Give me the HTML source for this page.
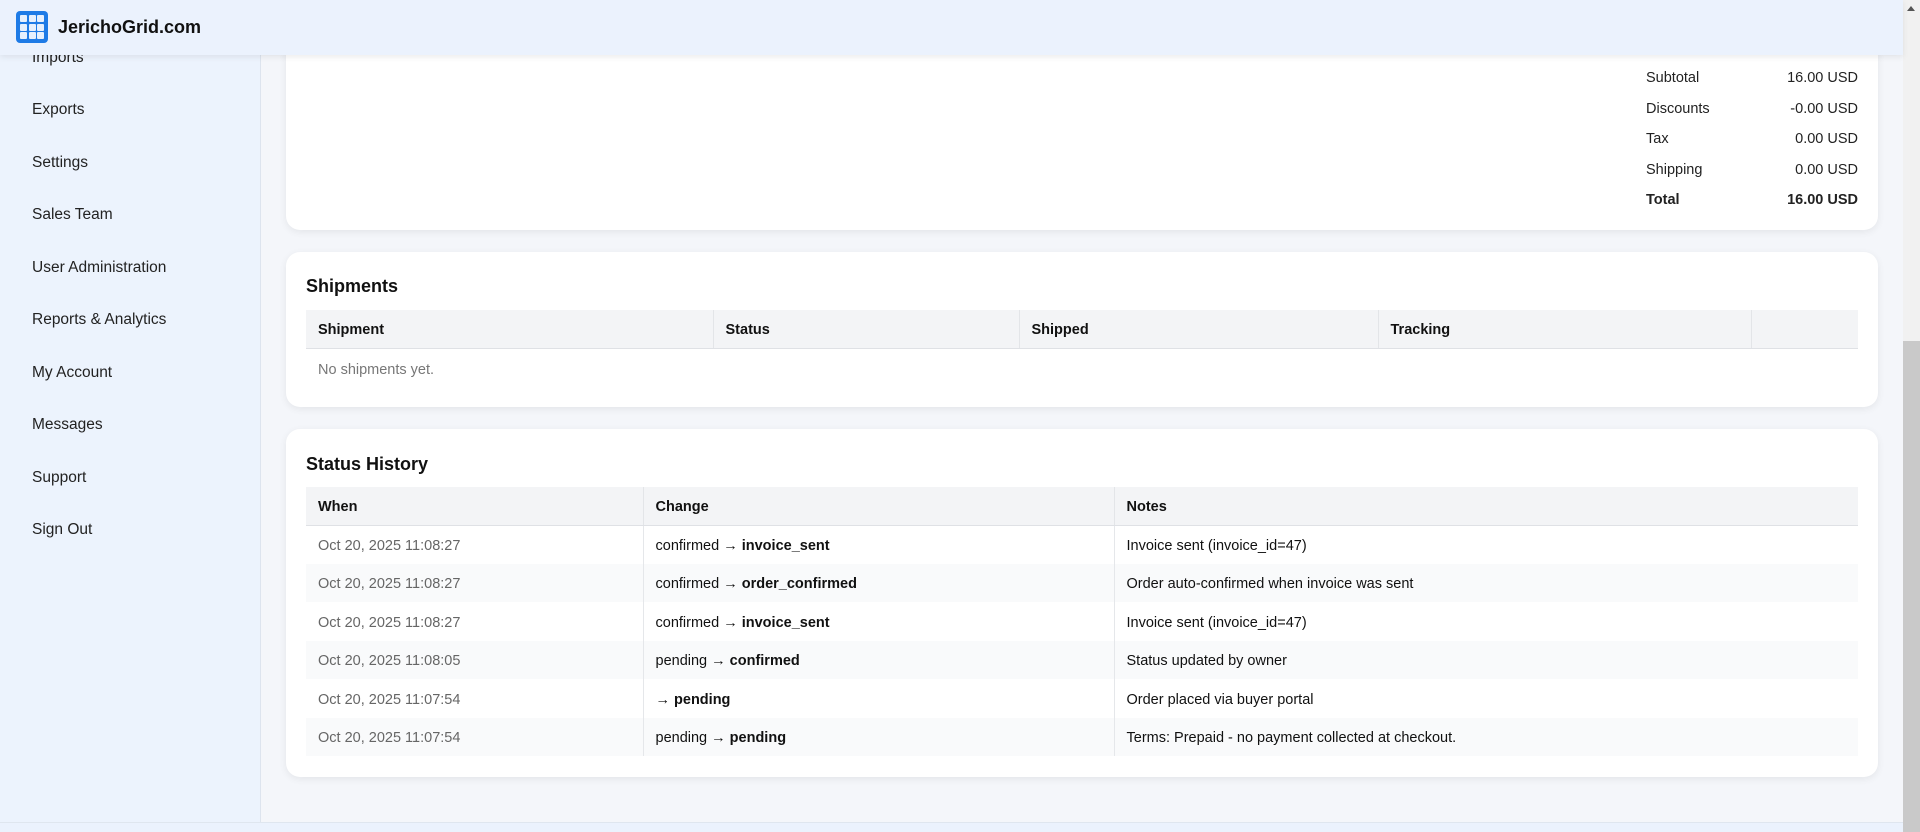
<!DOCTYPE html>
<html><head><meta charset="utf-8"><style>
*{box-sizing:border-box;margin:0;padding:0}
body{width:1920px;height:832px;overflow:hidden;background:#f4f6fa;font-family:"Liberation Sans",sans-serif;color:#1f2328;position:relative}
.hdr{position:absolute;left:0;top:0;width:1903px;height:55px;background:#ebf2fd;box-shadow:0 2px 6px rgba(0,0,0,.08);z-index:5}
.logo{position:absolute;left:16px;top:11px;width:32px;height:32px;background:#1e7be6;border-radius:4px}
.logo i{position:absolute;width:7px;height:7px;background:#e6f0fd;border-radius:1px}
.brand{position:absolute;left:58px;top:17px;font-size:18px;font-weight:bold;color:#111}
.side{position:absolute;left:0;top:0;width:261px;height:832px;background:#ecf3fd;border-right:1px solid #dde4ee}
.side div{position:absolute;left:32px;font-size:15.5px;color:#222}
.sb{position:absolute;right:0;top:0;width:17px;height:832px;background:#f1f1f1}
.thumb{position:absolute;right:0;top:341px;width:17px;height:491px;background:#c9c9c9}
.foot{position:absolute;left:0;top:822px;width:1903px;height:10px;background:#ebf2fd;border-top:1px solid #dfe6ef}
.card{position:absolute;left:286px;width:1592px;background:#fff;border-radius:14px;box-shadow:0 2px 8px rgba(0,0,0,.07)}
.sum div{position:absolute;font-size:14.5px;color:#222}
h2{position:absolute;left:20px;font-size:18px;font-weight:bold;color:#111}
table{position:absolute;left:20px;width:1552px;border-collapse:collapse;font-size:14.5px}
th{background:#f3f4f6;text-align:left;font-weight:bold;height:38px;padding:2px 12px 0;border-right:1px solid #e3e5e8;border-bottom:1px solid #dfe1e5;color:#111}
th:last-child{border-right:none}
td{height:38.5px;padding:3px 12px 0;border-right:1px solid #e5e7ea;color:#111}
td:last-child{border-right:none}
td.w{color:#666}
tr.s td{background:#f9fafb}
</style></head><body>
<div class="side">
<div style="top:49px">Imports</div>
<div style="top:101px">Exports</div>
<div style="top:154px">Settings</div>
<div style="top:206px">Sales Team</div>
<div style="top:259px">User Administration</div>
<div style="top:311px">Reports &amp; Analytics</div>
<div style="top:364px">My Account</div>
<div style="top:416px">Messages</div>
<div style="top:469px">Support</div>
<div style="top:521px">Sign Out</div>
</div>
<div class="card" style="top:-20px;height:250px">
<div class="sum">
<div style="left:1360px;top:90px">Subtotal</div><div style="right:20px;top:90px">16.00 USD</div>
<div style="left:1360px;top:121px">Discounts</div><div style="right:20px;top:121px">-0.00 USD</div>
<div style="left:1360px;top:151px">Tax</div><div style="right:20px;top:151px">0.00 USD</div>
<div style="left:1360px;top:182px">Shipping</div><div style="right:20px;top:182px">0.00 USD</div>
<div style="left:1360px;top:212px;font-weight:bold">Total</div><div style="right:20px;top:212px;font-weight:bold">16.00 USD</div>
</div></div>
<div class="card" style="top:252px;height:155px">
<h2 style="top:24px">Shipments</h2>
<table style="top:58px"><tr><th style="width:407px">Shipment</th><th style="width:306px">Status</th><th style="width:359px">Shipped</th><th style="width:373px">Tracking</th><th></th></tr>
<tr><td colspan="5" style="color:#777;height:40px;border:none">No shipments yet.</td></tr></table>
</div>
<div class="card" style="top:429px;height:348px">
<h2 style="top:25px">Status History</h2>
<table style="top:58px"><tr><th style="width:337px">When</th><th style="width:471px">Change</th><th>Notes</th></tr>
<tr><td class="w">Oct 20, 2025 11:08:27</td><td>confirmed → <b>invoice_sent</b></td><td>Invoice sent (invoice_id=47)</td></tr>
<tr class="s"><td class="w">Oct 20, 2025 11:08:27</td><td>confirmed → <b>order_confirmed</b></td><td>Order auto-confirmed when invoice was sent</td></tr>
<tr><td class="w">Oct 20, 2025 11:08:27</td><td>confirmed → <b>invoice_sent</b></td><td>Invoice sent (invoice_id=47)</td></tr>
<tr class="s"><td class="w">Oct 20, 2025 11:08:05</td><td>pending → <b>confirmed</b></td><td>Status updated by owner</td></tr>
<tr><td class="w">Oct 20, 2025 11:07:54</td><td>→ <b>pending</b></td><td>Order placed via buyer portal</td></tr>
<tr class="s"><td class="w">Oct 20, 2025 11:07:54</td><td>pending → <b>pending</b></td><td>Terms: Prepaid - no payment collected at checkout.</td></tr>
</table></div>
<div class="foot"></div>
<div class="hdr"><div class="logo">
<i style="left:4px;top:4px"></i><i style="left:12.5px;top:4px"></i><i style="left:21px;top:4px"></i>
<i style="left:4px;top:12.5px"></i><i style="left:12.5px;top:12.5px"></i><i style="left:21px;top:12.5px"></i>
<i style="left:4px;top:21px"></i><i style="left:12.5px;top:21px"></i><i style="left:21px;top:21px"></i>
</div><div class="brand">JerichoGrid.com</div></div>
<div class="sb"><div style="position:absolute;left:4px;top:6px;width:0;height:0;border-left:4.5px solid transparent;border-right:4.5px solid transparent;border-bottom:5px solid #555"></div><div class="thumb"></div></div>
</body></html>
